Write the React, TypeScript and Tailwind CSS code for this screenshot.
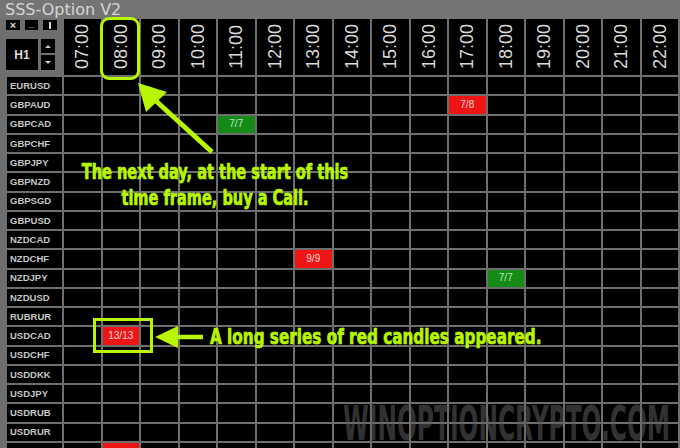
import React from "react";

const hours = ["07:00","08:00","09:00","10:00","11:00","12:00","13:00","14:00","15:00","16:00","17:00","18:00","19:00","20:00","21:00","22:00"];
const pairs = ["EURUSD","GBPAUD","GBPCAD","GBPCHF","GBPJPY","GBPNZD","GBPSGD","GBPUSD","NZDCAD","NZDCHF","NZDJPY","NZDUSD","RUBRUR","USDCAD","USDCHF","USDDKK","USDJPY","USDRUB","USDRUR",""];

type Sig = { text: string; kind: "red" | "green" };
const signals: Record<string, Sig> = {
  "1-10": { text: "7/8", kind: "red" },
  "2-4": { text: "7/7", kind: "green" },
  "9-6": { text: "9/9", kind: "red" },
  "10-11": { text: "7/7", kind: "green" },
  "13-1": { text: "13/13", kind: "red" },
  "19-1": { text: "", kind: "red" },
};

function Cell({ r, c }: { r: number; c: number }) {
  const s = signals[`${r}-${c}`];
  if (!s) return <div className="bg-black" />;
  if (s.kind === "red")
    return (
      <div className="bg-[#f01515] flex items-center justify-center text-[10px] leading-none text-[#ffd6d6] font-['Liberation_Sans',sans-serif]">
        {s.text}
      </div>
    );
  return (
    <div className="bg-[#168a16] flex items-center justify-center text-[10px] leading-none text-[#bfeabf] font-['Liberation_Sans',sans-serif]">
      {s.text}
    </div>
  );
}

export default function App() {
  return (
    <div className="relative w-[680px] h-[448px] overflow-hidden bg-[#6e6e6e] font-['Liberation_Sans',sans-serif]">
      <div className="h-[19px] bg-[#747474] flex items-center pl-[5px] text-[16px] leading-none text-[#d4d4d4] font-['DejaVu_Sans',sans-serif]">
        SSS-Option V2
      </div>
      <div className="grid grid-cols-[55px_repeat(16,36.5px)] grid-rows-[56px_repeat(20,17.25px)] gap-[2px] pl-[7px]">
        <div className="flex flex-col -ml-[1px] pt-[1px]">
          <div className="flex gap-[5px] h-[10px]">
            <div className="w-[14px] bg-black flex items-center justify-center text-[11px] leading-none text-[#d8d8d8] font-bold">×</div>
            <div className="w-[13px] bg-black flex items-end justify-center text-[9px] leading-none text-[#d8d8d8] font-bold pb-[1px]">_</div>
            <div className="w-[14px] bg-black flex items-center justify-center">
              <div className="w-[2px] h-[7px] bg-[#d8d8d8]" />
            </div>
          </div>
          <div className="flex mt-[9px] gap-[3px]">
            <div className="w-[32px] h-[31px] bg-black flex items-center justify-center text-[12px] leading-none text-[#dcdcdc] font-bold">H1</div>
            <div className="flex flex-col gap-[2px]">
              <div className="w-[14px] h-[14px] bg-black flex items-center justify-center">
                <div className="w-0 h-0 border-l-[3px] border-r-[3px] border-b-[3px] border-l-transparent border-r-transparent border-b-[#cfcfcf]" />
              </div>
              <div className="w-[14px] h-[15px] bg-black flex items-center justify-center">
                <div className="w-0 h-0 border-l-[3px] border-r-[3px] border-t-[3px] border-l-transparent border-r-transparent border-t-[#cfcfcf]" />
              </div>
            </div>
          </div>
        </div>
        {hours.map((h) => (
          <div key={h} className="bg-black flex items-center justify-center">
            <span className="[writing-mode:vertical-rl] rotate-180 text-[18px] leading-none text-[#dadada]">{h}</span>
          </div>
        ))}
        {pairs.map((p, r) => (
          <React.Fragment key={`row-${r}`}>
            <div className="bg-black flex items-center pl-[3px] text-[9.5px] leading-none text-[#c6c6c6] font-semibold">{p}</div>
            {hours.map((h, c) => (
              <Cell key={h} r={r} c={c} />
            ))}
          </React.Fragment>
        ))}
      </div>

      {/* annotations and watermark */}
      <div className="absolute left-[100px] top-[17px] w-[40px] h-[63px] border-[3px] border-[#b8f500] rounded-[9px]" />
      <div className="absolute left-[93px] top-[318px] w-[60px] h-[35px] border-[3px] border-[#b8f500]" />
      <svg className="absolute left-0 top-0 pointer-events-none" width="680" height="448" viewBox="0 0 680 448">
        <text
          x="670"
          y="440"
          textAnchor="end"
          fontSize="48"
          fontWeight="bold"
          fontFamily="'DejaVu Sans Condensed','DejaVu Sans',sans-serif"
          fill="rgba(95,95,95,0.55)"
          textLength="327"
          lengthAdjust="spacingAndGlyphs"
        >
          WINOPTIONCRYPTO.COM
        </text>
        <polygon points="138,83 167,92 146,112" fill="#b8f500" />
        <line x1="156" y1="101" x2="212" y2="152" stroke="#b8f500" strokeWidth="5" />
        <polygon points="155,337 178,326 178,348" fill="#b8f500" />
        <line x1="176" y1="337" x2="203" y2="337" stroke="#b8f500" strokeWidth="4.5" />
      </svg>
      <div className="absolute left-[15px] top-[159px] w-[400px] text-center scale-x-[0.77] text-[21px] leading-[26px] font-bold text-[#b8f500] [-webkit-text-stroke:0.7px_#b8f500] font-['DejaVu_Sans_Condensed','DejaVu_Sans',sans-serif] whitespace-nowrap">
        <div>The next day, at the start of this</div>
        <div>time frame, buy a Call.</div>
      </div>
      <div className="absolute left-[210px] top-[324px] origin-left scale-x-[0.77] text-[22px] leading-[26px] font-bold text-[#b8f500] [-webkit-text-stroke:0.7px_#b8f500] font-['DejaVu_Sans_Condensed','DejaVu_Sans',sans-serif] whitespace-nowrap">
        A long series of red candles appeared.
      </div>
    </div>
  );
}
